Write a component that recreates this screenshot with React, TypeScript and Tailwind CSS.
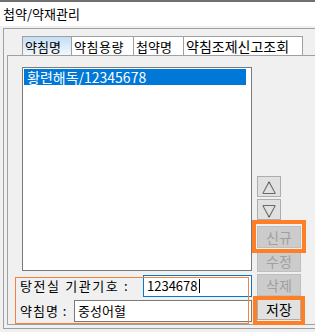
const tabs = [
  { label: '약침명', w: 'w-[50px]', active: true, extra: 'text-[13px]' },
  { label: '약침용량', w: 'w-[63px]', active: false, extra: 'text-[13px] tracking-[0.5px]' },
  { label: '첩약명', w: 'w-[51px]', active: false, extra: 'text-[13px]' },
  { label: '약침조제신고조회', w: 'w-[120px]', active: false, extra: 'text-[14px]' },
]

function SideButton({ label, disabled }: { label: string; disabled?: boolean }) {
  return (
    <div
      className={
        disabled
          ? 'flex h-[22px] w-[44px] items-center justify-center border border-[#bfbfbf] bg-[#cccccc] text-[14px] text-[#a0a0a0]'
          : 'flex h-[22px] w-[44px] items-center justify-center border border-[#adadad] bg-[#e1e1e1] text-[14px] text-black'
      }
    >
      {label}
    </div>
  )
}

export default function App() {
  return (
    <div className="relative h-[332px] w-[315px] overflow-hidden bg-[#f0f0f0] font-['Noto_Sans_CJK_KR',sans-serif] text-black">
      <div className="h-[26px] border-t-2 border-[#707070] bg-white pl-[3px] text-[13px] leading-[23px]">
        첩약/약재관리
      </div>

      <div className="ml-[3px] mt-[2px] h-[301px] w-[330px] border border-[#a0a0a0]">
        <div className="ml-[18px] mt-[7px] flex h-[19px]">
          {tabs.map((t) => (
            <div
              key={t.label}
              className={`${t.w} -mr-px flex h-[20px] items-center border border-[#a0a0a0] pl-[2px] leading-none ${
                t.active ? 'bg-gradient-to-b from-[#c4ddf6] to-[#f2f8fd]' : 'bg-white'
              } ${t.extra}`}
            >
              {t.label}
            </div>
          ))}
        </div>

        <div className="ml-[3px] flex h-[270px] border-y border-l border-[#a0a0a0]">
          <div className="w-[244px]">
            <div className="ml-[14px] mt-[11px] h-[204px] w-[230px] border border-[#7a7a7a] bg-white">
              <div className="ml-[1px] mt-[1px] flex h-[16px] w-[222px] items-center bg-[#0078d7] pl-[3px] text-[14px] leading-none text-white">
                황련해독/12345678
              </div>
            </div>

            <div className="mt-[4px] flex h-[22px] items-center">
              <div className="ml-[12px] w-[123px] whitespace-pre text-[13px] tracking-[1.6px]">탕전실 기관기호 :</div>
              <div className="flex h-[22px] flex-1 items-center border border-[#0078d7] bg-white pl-[3px] text-[13px]">
                <span className="border-r border-black pr-px leading-[14px]">1234678</span>
              </div>
            </div>

            <div className="mt-[3px] flex h-[22px] items-center">
              <div className="ml-[12px] w-[54px] whitespace-pre text-[13px] tracking-[1px]">약침명 :</div>
              <div className="flex h-[22px] flex-1 items-center border border-[#7a7a7a] bg-white pl-[3px] text-[13px]">
                중성어혈
              </div>
            </div>
          </div>

          <div className="ml-[5px] flex flex-col pt-[120px]">
            <div className="flex h-[21px] w-[24px] items-center justify-center border border-[#adadad] bg-[#e1e1e1] text-[14px] leading-none">
              △
            </div>
            <div className="mt-[2px] flex h-[21px] w-[24px] items-center justify-center border border-[#adadad] bg-[#e1e1e1] text-[14px] leading-none">
              ▽
            </div>
            <div className="mt-[6px] flex flex-col gap-[2px]">
              <SideButton label="신규" disabled />
              <SideButton label="수정" disabled />
              <SideButton label="삭제" disabled />
              <SideButton label="저장" />
            </div>
          </div>
        </div>
      </div>

      {/* annotation boxes */}
      <div className="pointer-events-none absolute left-[15px] top-[277px] h-[47px] w-[234px] border border-[#f4823a]" />
      <div className="pointer-events-none absolute left-[252px] top-[220px] h-[33px] w-[54px] border-[4px] border-[#ff7f27]" />
      <div className="pointer-events-none absolute left-[253px] top-[296px] h-[29px] w-[52px] border-[4px] border-[#ff7f27]" />
    </div>
  )
}
